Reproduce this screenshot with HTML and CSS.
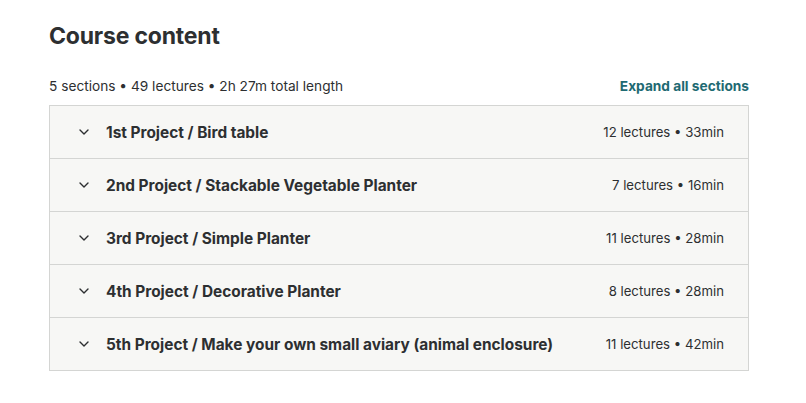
FILE: index.html
```html
<!DOCTYPE html>
<html>
<head>
<meta charset="utf-8">
<link rel="stylesheet" href="styles.css">
</head>
<body>
<div class="wrap">
  <h2 class="title">Course content</h2>
  <div class="meta">
    <span class="stats">5 sections • 49 lectures • 2h 27m total length</span>
    <span class="expand">Expand all sections</span>
  </div>
  <div class="list">
    <div class="row">
      <svg class="chev" width="10" height="6" viewBox="0 0 10 6"><path d="M1 1l4 4 4-4" fill="none" stroke="#2d2f31" stroke-width="1.4" stroke-linecap="round" stroke-linejoin="round"/></svg>
      <span class="name">1st Project / Bird table</span>
      <span class="info">12 lectures • 33min</span>
    </div>
    <div class="row">
      <svg class="chev" width="10" height="6" viewBox="0 0 10 6"><path d="M1 1l4 4 4-4" fill="none" stroke="#2d2f31" stroke-width="1.4" stroke-linecap="round" stroke-linejoin="round"/></svg>
      <span class="name">2nd Project / Stackable Vegetable Planter</span>
      <span class="info">7 lectures • 16min</span>
    </div>
    <div class="row">
      <svg class="chev" width="10" height="6" viewBox="0 0 10 6"><path d="M1 1l4 4 4-4" fill="none" stroke="#2d2f31" stroke-width="1.4" stroke-linecap="round" stroke-linejoin="round"/></svg>
      <span class="name">3rd Project / Simple Planter</span>
      <span class="info">11 lectures • 28min</span>
    </div>
    <div class="row">
      <svg class="chev" width="10" height="6" viewBox="0 0 10 6"><path d="M1 1l4 4 4-4" fill="none" stroke="#2d2f31" stroke-width="1.4" stroke-linecap="round" stroke-linejoin="round"/></svg>
      <span class="name">4th Project / Decorative Planter</span>
      <span class="info">8 lectures • 28min</span>
    </div>
    <div class="row">
      <svg class="chev" width="10" height="6" viewBox="0 0 10 6"><path d="M1 1l4 4 4-4" fill="none" stroke="#2d2f31" stroke-width="1.4" stroke-linecap="round" stroke-linejoin="round"/></svg>
      <span class="name">5th Project / Make your own small aviary (animal enclosure)</span>
      <span class="info">11 lectures • 42min</span>
    </div>
  </div>
</div>
</body>
</html>
```
FILE: styles.css
```css
* { box-sizing: border-box; }
body {
  margin: 0;
  background: #ffffff;
  font-family: Inter, "Liberation Sans", sans-serif;
  color: #2d2f31;
}
.wrap {
  width: 700px;
  margin-left: 49px;
  padding-top: 21px;
}
.title {
  margin: 0;
  font-size: 23px;
  font-weight: 700;
  line-height: 30px;
  letter-spacing: -0.2px;
}
.meta {
  display: flex;
  justify-content: space-between;
  align-items: center;
  margin-top: 24px;
  height: 22px;
  font-size: 13.7px;
}
.expand {
  color: #1e6a72;
  font-weight: 700;
}
.list {
  margin-top: 8px;
  border: 1px solid #d4d5d3;
  background: #f7f7f5;
}
.row {
  display: flex;
  align-items: center;
  height: 53px;
  padding: 0 24px 0 29px;
  border-top: 1px solid #d4d5d3;
}
.row:first-child { border-top: none; height: 52px; }
.chev { flex: none; margin-right: 17px; }
.name {
  flex: 1;
  font-size: 15.4px;
  font-weight: 700;
}
.info {
  font-size: 13.2px;
}
```
